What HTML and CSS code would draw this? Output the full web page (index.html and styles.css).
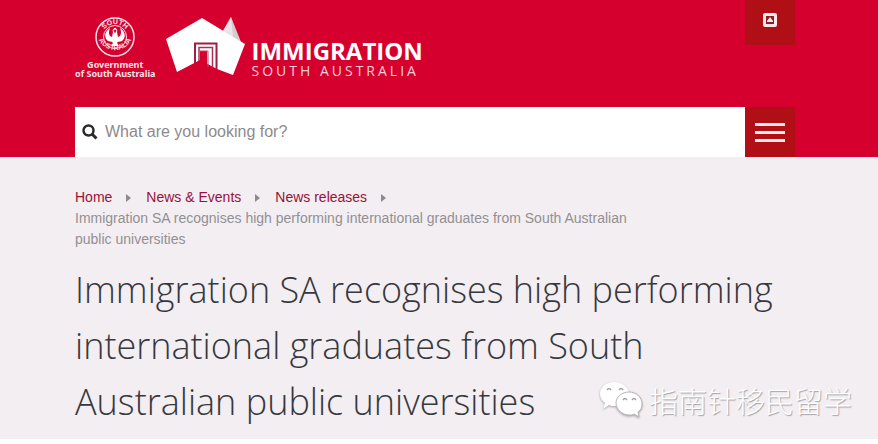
FILE: index.html
```html
<!DOCTYPE html>
<html lang="en">
<head>
<meta charset="UTF-8">
<meta name="viewport" content="width=device-width, initial-scale=1.0">
<title>Immigration SA recognises high performing international graduates</title>
<link rel="stylesheet" href="styles.css">
</head>
<body>
<header class="header">
  <div class="container">
    <div class="top">
      <div class="logos">
        <a class="gov" href="#">
          <svg class="seal" viewBox="0 0 40 40" aria-hidden="true">
            <defs>
              <path id="arc-top" d="M7 20a13 13 0 0 1 26 0"/>
              <path id="arc-bottom" d="M2.200 17a17.900 17.900 0 0 0 35.600 0"/>
            </defs>
            <circle cx="20" cy="20" r="19" fill="none" stroke="#fde3e8" stroke-width="1.500"/>
            <circle cx="20" cy="20" r="11.500" fill="none" stroke="#fde3e8"/>
            <text class="seal-text"><textPath href="#arc-top" startOffset="50%" text-anchor="middle">SOUTH</textPath></text>
            <text class="seal-text"><textPath href="#arc-bottom" startOffset="50%" text-anchor="middle">AUSTRALIA</textPath></text>
            <path d="M15 11c-6 4-6 10-2 13 2 1 4 0 5 2l-2 3h8l-2-3c1-2 3-1 5-2 4-3 4-9-2-13 2 5 1 8-2 9l-1-5c1-2-1-4-2-4s-3 2-2 4l-1 5c-3-1-4-4-2-9z" fill="#fff"/>
            <path d="M18.500 13.500q1.500-2 3 0l-1.500 3z" fill="#b31532"/>
          </svg>
          <span>Government<br>of South Australia</span>
        </a>
        <a class="immi" href="#">
          <svg class="map" viewBox="0 0 80 58" aria-hidden="true">
            <path d="M57 14 65 0l10 25z" fill="#d4cdd0"/>
            <path d="M57 14 65 0l2 20z" fill="#ebe4e6"/>
            <path d="M0 22 36 1l43 26-12 31-16-6-17-9L11 55z" fill="#fff"/>
            <path d="M29 46V26.500h21.500V53" fill="none" stroke="#a01c40" stroke-width="2"/>
            <path d="M33 44V30.500h13.500V51" fill="none" stroke="#a83058" stroke-width="1.500"/>
            <path d="M30 46l4-3v-9h7v15l-7-4-5 2z" fill="#d6002f"/>
            <path d="M34 34h8v16" fill="none" stroke="#b8486a"/>
          </svg>
          <span class="brand"><strong>IMMIGRATION</strong><small>SOUTH AUSTRALIA</small></span>
        </a>
      </div>
      <button class="square up" type="button" aria-label="Up">
        <svg viewBox="0 0 14 14" width="14" height="14" aria-hidden="true">
          <rect width="14" height="14" rx="2" fill="#fde8ea"/>
          <rect x="3" y="3" width="8" height="8" fill="#8e1c25"/>
          <path d="M7 4l3 4H4zM4 8h6v1H4z" fill="#fde8ea"/>
        </svg>
      </button>
    </div>
    <form class="search">
      <label class="field">
        <svg viewBox="0 0 16 16" width="16" height="16" aria-hidden="true">
          <circle cx="6.500" cy="6.500" r="5" fill="none" stroke="#2b2b2b" stroke-width="2.500"/>
          <path d="M10 10l4.500 4.500" stroke="#2b2b2b" stroke-width="3"/>
        </svg>
        <input type="text" placeholder="What are you looking for?" aria-label="Search">
      </label>
      <button class="square" type="button" aria-label="Menu">
        <svg viewBox="0 0 30 19" width="30" height="19" aria-hidden="true">
          <path d="M0 1.500h30M0 9.500h30M0 17.500h30" stroke="#fde8ea" stroke-width="3"/>
        </svg>
      </button>
    </form>
  </div>
</header>
<main class="main">
  <div class="container">
    <nav class="crumbs" aria-label="Breadcrumb">
      <ol>
        <li><a href="#">Home</a></li>
        <li><a href="#">News &amp; Events</a></li>
        <li><a href="#">News releases</a></li>
        <li class="current">Immigration SA recognises high performing international graduates from South Australian public universities</li>
      </ol>
    </nav>
    <h1>Immigration SA recognises high performing international graduates from South Australian public universities</h1>
  </div>
  <div class="watermark">
    <svg viewBox="0 0 44 38" width="44" height="38" aria-hidden="true">
      <path d="M15 1C7 1 1 6 1 13c0 4 2 7 5 9l-2 6 6-4c2 1 4 1 6 1 8 0 14-5 14-12S23 1 15 1z" fill="#fff"/>
      <path d="M30 11c-7 0-13 5-13 11s6 12 13 12c2 0 4 0 5-1l5 3-1-5c3-2 4-5 4-8 0-7-6-12-13-12z" fill="#fff" stroke="#b9b5ba"/>
      <path d="M8 9q2-3 4 0M20 9q2-3 4 0M24 19q2-3 4 0M33 19q2-3 4 0" fill="none" stroke="#a5a1a6" stroke-width="1.500"/>
    </svg>
    <span lang="zh">指南针移民留学</span>
  </div>
</main>
</body>
</html>
```
FILE: styles.css
```css
* {
  box-sizing: border-box;
}

body {
  margin: 0;
  background: #fff;
  font-family: "Liberation Sans", Arial, sans-serif;
  font-size: 14px;
  line-height: 21px;
}

a {
  color: #9c1038;
  text-decoration: none;
}

.header,
.main {
  padding: 0 8px 0 0;
}

.container {
  max-width: 720px;
  margin: 0 auto;
}

/* header */
.header {
  background: #d6002f;
}

.top {
  display: flex;
  justify-content: space-between;
  align-items: flex-start;
  min-height: 107px;
}

.logos {
  display: flex;
  gap: 11px;
  padding-top: 17px;
}

.gov {
  display: flex;
  flex-direction: column;
  align-items: center;
  gap: 3px;
  color: #fde3e8;
  font: bold 9px/9px "Noto Sans", sans-serif;
  text-align: center;
}

.seal {
  width: 40px;
  height: 40px;
}

.seal-text {
  fill: #fde3e8;
  font: bold 7px "Liberation Sans", sans-serif;
}

.immi {
  display: flex;
  gap: 5px;
  color: #fff;
}

.map {
  width: 80px;
  height: 58px;
}

.brand {
  display: flex;
  flex-direction: column;
  padding-top: 22px;
  font-family: "Open Sans", sans-serif;
}

.brand strong {
  font-size: 24px;
  line-height: 24px;
}

.brand small {
  color: #fbd0d8;
  font-size: 14px;
  line-height: 16px;
  letter-spacing: 3px;
}

.square {
  display: flex;
  align-items: center;
  justify-content: center;
  width: 50px;
  height: 50px;
  padding: 0;
  border: 0;
  background: #b00f16;
  cursor: pointer;
}

.up {
  height: 45px;
  padding-bottom: 5px;
}

.search {
  display: flex;
}

.field {
  display: flex;
  flex: 1;
  align-items: center;
  gap: 7px;
  padding-left: 7px;
  background: #fff;
}

.field input {
  flex: 1;
  border: 0;
  padding: 0;
  outline: none;
  background: none;
  font: 16px/24px "Liberation Sans", Arial, sans-serif;
}

.field input::placeholder {
  color: #8c8a8d;
}

/* page content */
.main {
  position: relative;
  padding-top: 30px;
  padding-bottom: 9px;
  background: #f2eef2;
}

.crumbs ol {
  display: flex;
  flex-wrap: wrap;
  max-width: 580px;
  margin: 0;
  padding: 0;
  list-style: none;
}

.crumbs li {
  display: flex;
  align-items: center;
}

.crumbs li:not(.current)::after {
  content: "";
  margin: 0 15px 0 14px;
  border: 4px solid transparent;
  border-left: 5px solid #8c8a8d;
  border-right: 0;
}

.crumbs .current {
  color: #939094;
}

h1 {
  margin: 12px 0 0;
  color: #37383d;
  font: 300 36px/56px "Open Sans", sans-serif;
}

.watermark {
  position: absolute;
  right: 26px;
  bottom: 19px;
  display: flex;
  align-items: center;
  gap: 6px;
  color: #fff;
  font: 300 29px/40px "Noto Sans CJK SC", sans-serif;
  text-shadow: 1px 1px 1px #a5a1a6;
}

.watermark svg {
  filter: drop-shadow(0 1px 1px #a5a1a6);
}
```
